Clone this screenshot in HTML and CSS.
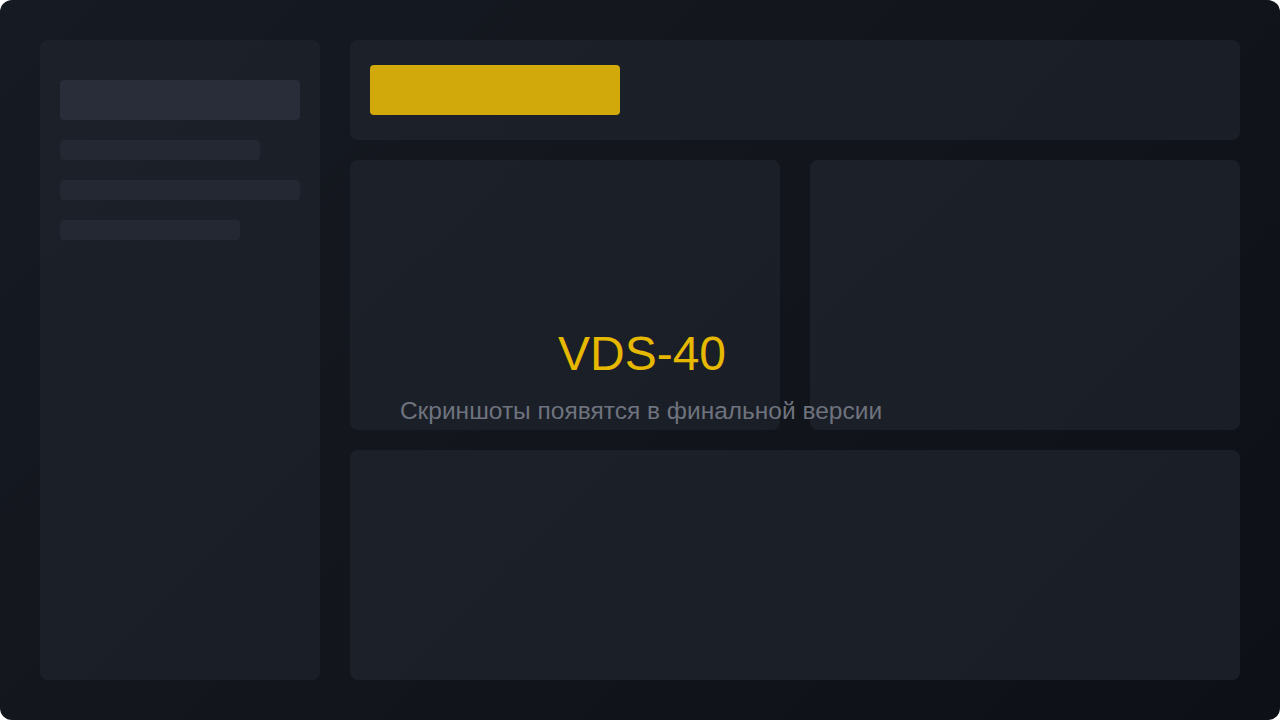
FILE: index.html
```html
<!DOCTYPE html>
<html lang="ru">
<head>
    <meta charset="UTF-8">
    <meta name="viewport" content="width=device-width, initial-scale=1.0">
    <title>VDS-40</title>
    <link rel="stylesheet" href="styles.css">
</head>
<body>
    <div class="screen">
        <aside class="sidebar">
            <div class="sk sk-title"></div>
            <div class="sk sk-line" style="width: 200px"></div>
            <div class="sk sk-line" style="width: 240px"></div>
            <div class="sk sk-line" style="width: 180px"></div>
        </aside>

        <main class="main">
            <div class="panel header">
                <div class="accent-btn"></div>
            </div>
            <div class="cards">
                <div class="panel"></div>
                <div class="panel"></div>
            </div>
            <div class="panel wide"></div>
        </main>

        <!-- placeholder caption over the mock layout -->
        <div class="caption">
            <div class="caption-title">VDS-40</div>
            <div class="caption-sub">Скриншоты появятся в финальной версии</div>
        </div>
    </div>
</body>
</html>
```

FILE: styles.css
```css
html, body {
    margin: 0;
    background: #ffffff;
}
.screen {
    position: relative;
    width: 1280px;
    height: 720px;
    box-sizing: border-box;
    padding: 40px;
    display: flex;
    gap: 30px;
    border-radius: 12px;
    overflow: hidden;
    background: linear-gradient(135deg, #161a22 0%, #12151c 50%, #0e1017 100%);
    font-family: "Liberation Sans", Arial, sans-serif;
}
.sidebar {
    width: 280px;
    flex: none;
    box-sizing: border-box;
    padding: 40px 20px;
    background: linear-gradient(135deg, #1c2029, #1a1e27);
    border-radius: 8px;
    display: flex;
    flex-direction: column;
    gap: 20px;
}
.sk {
    border-radius: 4px;
    background: #232833;
}
.sk-title {
    height: 40px;
    background: #282d39;
}
.sk-line {
    height: 20px;
}
.main {
    flex: 1;
    display: flex;
    flex-direction: column;
    gap: 20px;
}
.panel {
    background: linear-gradient(135deg, #1c2029, #1a1e27);
    border-radius: 8px;
}
.header {
    height: 100px;
    box-sizing: border-box;
    padding: 25px 20px;
}
.accent-btn {
    width: 250px;
    height: 50px;
    border-radius: 4px;
    background: #d1a90a;
}
.cards {
    display: grid;
    grid-template-columns: 1fr 1fr;
    gap: 30px;
    height: 270px;
}
.wide {
    flex: 1;
}
.caption {
    position: absolute;
    left: 0;
    right: 0;
    top: 322px;
    display: flex;
    flex-direction: column;
    align-items: center;
    gap: 10px;
}
.caption-title {
    font-size: 48px;
    line-height: 64px;
    color: #e6b800;
    padding-left: 4px;
}
.caption-sub {
    font-size: 24.5px;
    line-height: 30px;
    color: #6e737e;
    padding-left: 2px;
}
```
